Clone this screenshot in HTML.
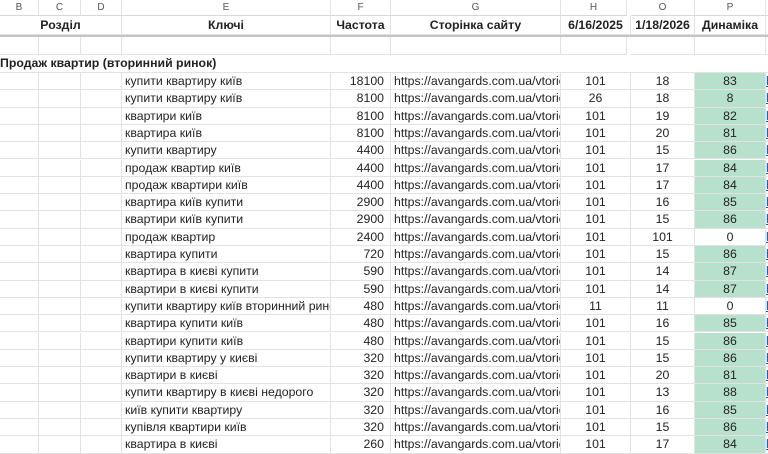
<!DOCTYPE html>
<html><head><meta charset="utf-8"><style>
body{margin:0;width:768px;height:450px;overflow:hidden;background:#fff;font-family:"Liberation Sans",sans-serif;font-size:12.3px;color:#222;position:relative}
.c{position:absolute;box-sizing:border-box;border-right:1px solid #e2e2e2;border-bottom:1px solid #e2e2e2;white-space:nowrap;overflow:hidden;line-height:17px}
.h{color:#555;font-size:10px;text-align:center;line-height:16px;border-bottom-color:#d8d8d8}
.b{font-weight:bold;text-align:center;font-size:12.3px}
.r{text-align:right;padding-right:6px}
.m{text-align:center}
.g{background:#b7e1cd}
.l{padding-left:3px}
</style></head><body>
<div id="w"></div>
<div style="position:absolute;left:0;top:35px;width:768px;height:2px;background:#c4c4c4"></div>
<script>
var cols=[[0,39,'B'],[39,42,'C'],[81,41,'D'],[122,209,'E'],[331,60,'F'],[391,170,'G'],[561,66,'H'],[631,64,'O'],[695,71,'P'],[766,10,'']];
var h='';
cols.forEach(function(c){h+='<div class="c h" style="left:'+c[0]+'px;top:0;width:'+c[1]+'px;height:16px">'+c[2]+'</div>';});
var hd=['Розділ','','','Ключі','Частота','Сторінка сайту','6/16/2025','1/18/2026','Динаміка',''];
var hc=[[0,122],null,null,[122,209],[331,60],[391,170],[561,70],[631,64],[695,71],[766,10]];
hc.forEach(function(c,i){if(c)h+='<div class="c b" style="left:'+c[0]+'px;top:16px;width:'+c[1]+'px;height:19px;line-height:19px">'+hd[i]+'</div>';});
cols.forEach(function(c){h+='<div class="c" style="left:'+c[0]+'px;top:37px;width:'+c[1]+'px;height:18px"></div>';});
h+='<div class="c" style="left:0;top:55px;width:768px;height:18px;font-weight:bold;border-right:none">Продаж квартир (вторинний ринок)</div>';
var d=[['купити квартиру київ',18100,101,18,83],['купити квартиру київ',8100,26,18,8],['квартири київ',8100,101,19,82],['квартира київ',8100,101,20,81],['купити квартиру',4400,101,15,86],['продаж квартир київ',4400,101,17,84],['продаж квартири київ',4400,101,17,84],['квартира київ купити',2900,101,16,85],['квартири київ купити',2900,101,15,86],['продаж квартир',2400,101,101,0],['квартира купити',720,101,15,86],['квартира в києві купити',590,101,14,87],['квартири в києві купити',590,101,14,87],['купити квартиру київ вторинний ринок',480,11,11,0],['квартира купити київ',480,101,16,85],['квартири купити київ',480,101,15,86],['купити квартиру у києві',320,101,15,86],['квартири в києві',320,101,20,81],['купити квартиру в києві недорого',320,101,13,88],['київ купити квартиру',320,101,16,85],['купівля квартири київ',320,101,15,86],['квартира в києві',260,101,17,84]];
d.forEach(function(r,i){var t=(73+i*17.3).toFixed(1),s='top:'+t+'px;height:17.3px;';
h+='<div class="c" style="left:0;'+s+'width:39px"></div><div class="c" style="left:39px;'+s+'width:42px"></div><div class="c" style="left:81px;'+s+'width:41px"></div>';
h+='<div class="c l" style="left:122px;'+s+'width:209px">'+r[0]+'</div>';
h+='<div class="c r" style="left:331px;'+s+'width:60px">'+r[1]+'</div>';
h+='<div class="c l" style="left:391px;'+s+'width:170px">https://avangards.com.ua/vtorichka/</div>';
h+='<div class="c m" style="left:561px;'+s+'width:70px">'+r[2]+'</div>';
h+='<div class="c m" style="left:631px;'+s+'width:64px">'+r[3]+'</div>';
h+='<div class="c m'+(r[4]?' g':'')+'" style="left:695px;'+s+'width:71px">'+r[4]+'</div>';
h+='<div class="c" style="left:766px;'+s+'width:10px;color:#15c;text-decoration:underline">h</div>';});
document.getElementById('w').innerHTML=h;
</script>
</body></html>
